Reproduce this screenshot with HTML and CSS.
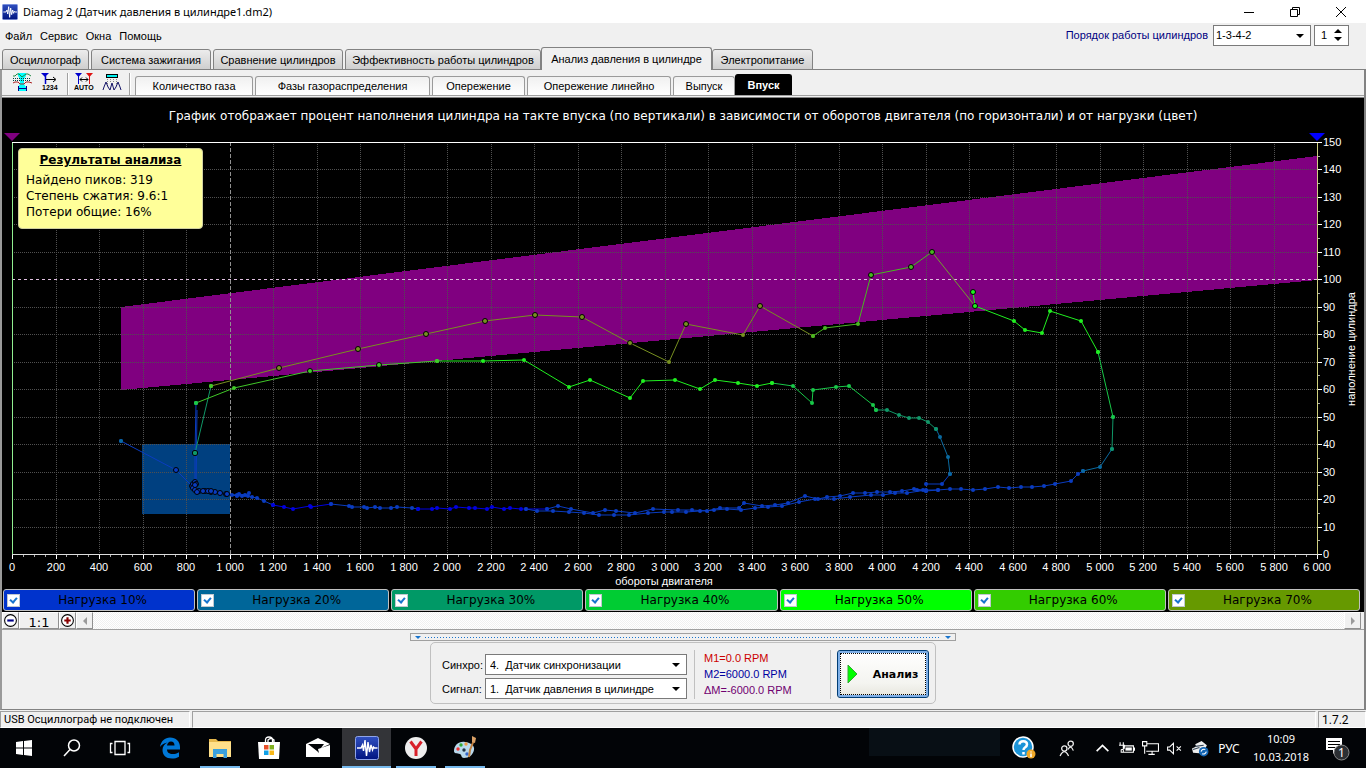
FILE: index.html
```html
<!DOCTYPE html>
<html lang="ru">
<head>
<meta charset="utf-8">
<title>Diamag 2</title>
<link rel="stylesheet" href="styles.css">
</head>
<body>
<svg class="defs" aria-hidden="true">
  <defs>
    <linearGradient id="appFill" x1="0" y1="0" x2="0" y2="1"><stop offset="0" stop-color="#3050c0"/><stop offset="1" stop-color="#001480"/></linearGradient>
    <symbol id="app-icon" viewBox="0 0 24 24">
      <rect x="0.5" y="0.5" width="23" height="23" rx="2" fill="url(#appFill)" stroke="#8fa4e8"/>
      <path d="M2 12h4l1.5-3 1 6 1.500-11 1.500 16 1.500-14 1.500 10 1.500-7 1.500 5 1-3 1 1h3" fill="none" stroke="#fff" stroke-width="1.400"/>
    </symbol>
  </defs>
</svg>

<header class="titlebar">
  <svg class="titlebar-icon"><use href="#app-icon"/></svg>
  <span class="titlebar-text">Diamag 2 (Датчик давления в цилиндре1.dm2)</span>
  <button class="win-btn" aria-label="Свернуть"><svg viewBox="0 0 12 12"><path d="M1 6.500h10"/></svg></button>
  <button class="win-btn" aria-label="Восстановить"><svg viewBox="0 0 12 12"><path d="M1.500 3.500h7v7h-7zM3.500 3v-1.500h7v7H9"/></svg></button>
  <button class="win-btn" aria-label="Закрыть"><svg viewBox="0 0 12 12"><path d="M1 1l10 10M11 1L1 11"/></svg></button>
</header>

<div class="menubar">
  <nav class="menu">
    <button>Файл</button><button>Сервис</button><button>Окна</button><button>Помощь</button>
  </nav>
  <label class="order-label" for="order">Порядок работы цилиндров</label>
  <span class="combo combo-order"><select id="order"><option>1-3-4-2</option></select></span>
  <span class="spinner">
    <input type="text" value="1" aria-label="Номер цилиндра">
    <span class="spinner-buttons">
      <button class="spin-up" aria-label="Больше"></button>
      <button class="spin-down" aria-label="Меньше"></button>
    </span>
  </span>
</div>

<div class="tabs">
  <button class="tab w-osc">Осциллограф</button>
  <button class="tab w-ign">Система зажигания</button>
  <button class="tab w-cmp">Сравнение цилиндров</button>
  <button class="tab w-eff">Эффективность работы цилиндров</button>
  <button class="tab w-prs tab-active">Анализ давления в цилиндре</button>
  <button class="tab w-pow">Электропитание</button>
</div>

<main class="workspace">
  <div class="toolbar">
    <button class="tool" aria-label="Фазы"><svg viewBox="0 0 20 20"><path fill="#0ff" d="M6 1h8v3l-2 3v5l2 3v4H6v-4l2-3V7L6 4z"/><path d="M1 4h2l2-2h2l3 3 4-3h2l3 2" fill="none" stroke="#284" /><path d="M1 6.500h18M1 8.500h18" stroke="#044" stroke-dasharray="1 1"/><path d="M1 11l2-1h3l2 2h4l2-2h3l3 1" fill="none" stroke="#a22"/><path d="M6.500 14v5M14.500 14v5M7 16.500h7" stroke="#008"/></svg></button>
    <button class="tool" aria-label="Номера"><svg viewBox="0 0 20 20"><path fill="#00c" d="M1 1h8L5 5z"/><path d="M5.500 4v8" stroke="#00c" stroke-width="1.500"/><path d="M6 7.500h9M13 5l3 2.500-3 2.500" fill="none" stroke="#000"/><text x="2" y="18" class="tool-text">1234</text></svg></button>
    <span class="tool-sep"></span>
    <button class="tool" aria-label="Авто"><svg viewBox="0 0 20 20"><path fill="#00c" d="M1 1h7L4.500 5z"/><path fill="#d11" d="M12 1h7l-3.500 4z"/><path d="M4.500 4v8" stroke="#00c"/><path d="M15.500 4v8" stroke="#d11"/><path d="M6 7.500h8M8 5.500l-2 2 2 2M12 5.500l2 2-2 2" fill="none" stroke="#000"/><text x="0" y="18" class="tool-text">AUTO</text></svg></button>
    <button class="tool" aria-label="Пики"><svg viewBox="0 0 20 20"><rect x="4.500" y="2.500" width="11" height="3" fill="#0ee" stroke="#000"/><path d="M5.500 7v7M8.500 7v3M11.500 7v3M14.500 7v7" stroke="#888" stroke-dasharray="1 1"/><path d="M1 18l1-3 2-5 2 5 2 3 2-7 2 7 2-3 2-5 2 5 1 3" fill="none" stroke="#116"/></svg></button>
    <span class="tool-sep"></span>
    <button class="subtab s-gas">Количество газа</button>
    <button class="subtab s-phase">Фазы газораспределения</button>
    <button class="subtab s-adv">Опережение</button>
    <button class="subtab s-lin">Опережение линейно</button>
    <button class="subtab s-out">Выпуск</button>
    <button class="subtab s-in subtab-active">Впуск</button>
  </div>

  <section class="chart">
    <h1 class="chart-title">График отображает процент наполнения цилиндра на такте впуска (по вертикали) в зависимости от оборотов двигателя (по горизонтали) и от нагрузки (цвет)</h1>
    <svg id="plot" class="plot" viewBox="2 132 1362 456" role="img" aria-label="Наполнение цилиндра от оборотов двигателя"></svg>
    <aside class="results">
      <h2>Результаты анализа</h2>
      <p>Найдено пиков: 319</p>
      <p>Степень сжатия: 9.6:1</p>
      <p>Потери общие: 16%</p>
    </aside>
    <div class="loads">
      <label class="load load-10"><input type="checkbox" checked><span>Нагрузка 10%</span></label>
      <label class="load load-20"><input type="checkbox" checked><span>Нагрузка 20%</span></label>
      <label class="load load-30"><input type="checkbox" checked><span>Нагрузка 30%</span></label>
      <label class="load load-40"><input type="checkbox" checked><span>Нагрузка 40%</span></label>
      <label class="load load-50"><input type="checkbox" checked><span>Нагрузка 50%</span></label>
      <label class="load load-60"><input type="checkbox" checked><span>Нагрузка 60%</span></label>
      <label class="load load-70"><input type="checkbox" checked><span>Нагрузка 70%</span></label>
    </div>
  </section>

  <div class="scrollrow">
    <button class="zoom-btn" aria-label="Уменьшить"><svg viewBox="0 0 14 14"><circle cx="7" cy="7" r="5.500"/><path stroke="#008" d="M4 7h6"/></svg></button>
    <button class="zoom-btn zoom-reset">1:1</button>
    <button class="zoom-btn" aria-label="Увеличить"><svg viewBox="0 0 14 14"><circle cx="7" cy="7" r="5.500"/><path stroke="#800" d="M4 7h6M7 4v6"/></svg></button>
    <button class="scroll-btn" aria-label="Влево"><svg viewBox="0 0 8 8"><path d="M6 0v8L2 4z"/></svg></button>
    <span class="scroll-track"></span>
    <button class="scroll-btn" aria-label="Вправо"><svg viewBox="0 0 8 8"><path d="M2 0v8l4-4z"/></svg></button>
  </div>

  <div class="controls">
    <div class="splitter"><i></i><span></span><i></i></div>
    <div class="group">
      <div class="sources">
        <label for="sync">Синхро:</label>
        <span class="combo"><select id="sync"><option>4.&nbsp; Датчик синхронизации</option></select></span>
        <label for="signal">Сигнал:</label>
        <span class="combo"><select id="signal"><option>1.&nbsp; Датчик давления в цилиндре</option></select></span>
      </div>
      <div class="markers">
        <span class="m1">M1=0.0 RPM</span>
        <span class="m2">M2=6000.0 RPM</span>
        <span class="dm">ΔM=-6000.0 RPM</span>
      </div>
      <button class="analyze"><svg viewBox="0 0 12 20"><path d="M1 1v18l9-9z"/></svg><span>Анализ</span></button>
    </div>
  </div>
</main>

<div class="statusbar">
  <span class="status-usb">USB Осциллограф не подключен</span>
  <span class="status-main"></span>
  <span class="status-version">1.7.2</span>
</div>

<footer class="taskbar">
  <button class="task task-sys" aria-label="Пуск"><svg viewBox="0 0 24 24"><path fill="#fff" d="M4 6l7-1v6.500H4zM12 5l8-1v7.500h-8zM4 12.500h7V19l-7-1zM12 12.500h8V20l-8-1z"/></svg></button>
  <button class="task task-sys" aria-label="Поиск"><svg viewBox="0 0 24 24"><g fill="none" stroke="#fff" stroke-width="1.500"><circle cx="14" cy="9.500" r="5.500"/><path d="M10 13.500L4 20"/></g></svg></button>
  <button class="task task-sys" aria-label="Представление задач"><svg viewBox="0 0 24 24"><g fill="none" stroke="#fff" stroke-width="1.300"><path d="M7 5.500h10v13H7zM4.500 7.500h-2v9h2M19.500 7.500h2v9h-2"/></g></svg></button>
  <button class="task task-edge" aria-label="Edge"><svg viewBox="0 0 24 24"><path fill="#0078d7" d="M2 11C3 5 7 1.500 12 1.500c6 0 10 4 10 9.500v2.500H9c0 3 2.500 4.500 5.500 4.500 2.500 0 4.500-.5 6.500-1.800v4.500C19 22 16.500 22.500 14 22.500c-6 0-9.500-3.500-9.500-8.500 0-3.500 2-6 5-7.500C5.500 7 3.500 9 2 11zm7-1.500h7.500c0-2.500-1.300-4-3.500-4-2.300 0-3.700 1.700-4 4z"/></svg></button>
  <button class="task task-open" aria-label="Проводник"><svg viewBox="0 0 24 24"><path fill="#e6b84c" d="M1 3h7l2 2h13v5H1z"/><path fill="#ffe08a" d="M1 6h22v15H1z"/><path fill="#3aa0dc" d="M5 13h14v9h-3.500v-4h-7v4H5z"/></svg></button>
  <button class="task" aria-label="Магазин"><svg viewBox="0 0 24 24"><path fill="none" stroke="#fff" stroke-width="1.300" d="M8.500 7V4q0-3 3.500-3t3.500 3v3M11 6V4q3-3 6 0v2"/><path fill="#fff" d="M1 6h22l-1 17H2z"/><path fill="#e8502a" d="M7 9h4.500v4.500H7z"/><path fill="#80b020" d="M12.500 9H17v4.500h-4.500z"/><path fill="#10a0e8" d="M7 14.500h4.500V19H7z"/><path fill="#f8b818" d="M12.500 14.500H17V19h-4.500z"/></svg></button>
  <button class="task" aria-label="Почта"><svg viewBox="0 0 24 24"><path fill="#fff" d="M0 8l12-6 12 6-9 4 3-4H2l9 7 2 2-1-4 12-4v12H0z"/></svg></button>
  <button class="task task-open task-current" aria-label="Diamag 2"><svg><use href="#app-icon"/></svg></button>
  <button class="task task-open" aria-label="Яндекс"><svg viewBox="0 0 24 24"><circle cx="12" cy="12" r="11" fill="#eee"/><path d="M6.500 5.500L12 13l5.500-7.500M12 12.500V20" fill="none" stroke="#d8202a" stroke-width="3"/></svg></button>
  <button class="task task-open" aria-label="Paint"><svg viewBox="0 0 24 24"><path fill="#b8d8ec" d="M1 15c0-6 5-10 11-9 6 .5 10 4 9 8-1 5-5 8-10 8-3 0-2-3-4-4-3-1-6 0-6-3z"/><circle cx="5" cy="13" r="1.700" fill="#e33"/><circle cx="8" cy="9" r="1.700" fill="#3a3"/><circle cx="13" cy="8" r="1.700" fill="#e94"/><circle cx="11" cy="14" r="1.700" fill="#234"/><circle cx="14" cy="18" r="1.700" fill="#36c"/><path d="M21 4l-4 10-1 7" fill="none" stroke="#c08040" stroke-width="2"/><path fill="#d9a066" d="M19 0l4 2-1 5-3-1z"/></svg></button>
  <span class="task-ghost"></span>
  <button class="tray tray-help" aria-label="Справка"><svg viewBox="0 0 24 24"><circle cx="11" cy="11" r="10" fill="#1c94d8" stroke="#fff" stroke-width="1.500"/><path d="M7.500 8.500C7.500 4 15 4 15 8.500c0 3-3.500 2.500-3.500 5.500M11.500 16v2.500" fill="none" stroke="#fff" stroke-width="2.500"/><circle cx="19" cy="18" r="4.500" fill="#f0a828"/><path d="M19 15.500v1M19 17.500v3.500" stroke="#fff" stroke-width="1.500"/></svg></button>
  <button class="tray tray-people" aria-label="Люди"><svg viewBox="0 0 16 16"><g fill="none" stroke="#eee" stroke-width="1.200"><circle cx="11" cy="3.500" r="2.500"/><circle cx="5" cy="8" r="2.500"/><path d="M8.500 9q2.500-5 5 1M1 15q4-8 8 0"/></g></svg></button>
  <button class="tray" aria-label="Скрытые значки"><svg viewBox="0 0 16 16"><path d="M2.500 10.500L8 5l5.500 5.500" fill="none" stroke="#fff" stroke-width="1.500"/></svg></button>
  <button class="tray" aria-label="Питание"><svg viewBox="0 0 16 16"><path d="M5 5.500h9.500v6H5zM15.500 7v3M2 2v3M5 2v3M1 5h5v2q0 2-3 2M3 9v2.500h2" fill="none" stroke="#fff"/><path fill="#fff" d="M7 7h6v3H7z"/></svg></button>
  <button class="tray" aria-label="Сеть"><svg viewBox="0 0 16 16"><path d="M4 3.500h11.500v7H4M6 13.500h6M9.500 11v2M.5 1.500h4v4h-4zM2.500 6v7" fill="none" stroke="#fff"/></svg></button>
  <button class="tray" aria-label="Звук"><svg viewBox="0 0 16 16"><path d="M1.500 6.500h2L7 3v10L3.500 9.500h-2zM10 6l4 4M14 6l-4 4" fill="none" stroke="#fff"/></svg></button>
  <button class="tray tray-cloud" aria-label="Облако"><svg viewBox="0 0 16 16"><path fill="#eee" d="M1 12L0 8l4-2-1-2 6-3 5 4-1 2 2 3-2 3z"/><path d="M3 6l8-1M1 9l6-2" stroke="#345"/><circle cx="11" cy="11" r="4.500" fill="#1466b4"/><path d="M8.500 11q1-3 4-2M13.500 11q-1 3-4 2" fill="none" stroke="#fff"/></svg></button>
  <button class="lang">РУС</button>
  <div class="clock"><span>10:09</span><span>10.03.2018</span></div>
  <button class="notify" aria-label="Уведомления"><svg viewBox="0 0 26 26"><path fill="#fff" d="M2 3h16v12h-5l-4 4v-4H2z"/><path d="M4 6.500h12M4 9.500h12M4 12.500h7" stroke="#000"/><circle cx="17.500" cy="17.500" r="7.500" fill="#2c2f33" stroke="#888"/><text x="17.500" y="22">1</text></svg></button>
</footer>
<script src="chart.js"></script>
</body>
</html>
```

FILE: styles.css
```css
* { box-sizing: border-box; }

body {
  margin: 0;
  min-height: 100vh;
  display: flex;
  flex-direction: column;
  background: #f0f0f0;
  color: #000;
  font-family: "Liberation Sans", Arial, sans-serif;
  font-size: 11px;
}

button, input, select {
  margin: 0;
  padding: 0;
  border: 0;
  background: none;
  color: inherit;
  font: inherit;
}

h1, h2, p { margin: 0; }

.defs { position: absolute; width: 0; height: 0; }

/* Title bar */
.titlebar {
  display: flex;
  align-items: center;
  height: 23px;
  padding: 0 2px;
  background: #fff;
  font-family: "Noto Sans", sans-serif;
}
.titlebar-icon { width: 16px; height: 16px; }
.titlebar-text { flex: 1; padding-left: 5px; }
.win-btn { display: flex; justify-content: center; width: 46px; }
.win-btn svg { width: 12px; height: 12px; fill: none; stroke: #000; }

/* Menu row */
.menubar {
  display: flex;
  align-items: center;
  height: 24px;
  padding-right: 17px;
}
.menu {
  display: flex;
  flex: 1;
  gap: 8px;
  padding: 1px 0 0 5px;
}
.order-label { color: #000080; padding-right: 5px; }

.combo {
  position: relative;
  display: block;
  height: 21px;
  border: 1px solid #7a7a7a;
  background: #fff;
}
.combo::after {
  content: "";
  position: absolute;
  top: 8px;
  right: 6px;
  border: 4px solid transparent;
  border-top-color: #000;
  border-bottom: 0;
  pointer-events: none;
}
.combo select {
  width: 100%;
  height: 100%;
  padding-left: 4px;
  appearance: none;
}
.combo-order { width: 98px; }
.combo-order select { padding-left: 2px; }

.spinner {
  display: flex;
  width: 35px;
  height: 21px;
  margin-left: 3px;
  border: 1px solid #7a7a7a;
  background: #fff;
}
.spinner input { width: 19px; padding-left: 6px; }
.spinner-buttons { display: flex; flex-direction: column; justify-content: center; gap: 4px; }
.spin-up, .spin-down { border: 4px solid transparent; }
.spin-up { border-top: 0; border-bottom-color: #000; }
.spin-down { border-bottom: 0; border-top-color: #000; }

/* Main tabs */
.tabs {
  display: flex;
  align-items: flex-end;
  gap: 2px;
  height: 23px;
  padding-left: 2px;
  box-shadow: inset 0 -1px #828282;
}
.tab {
  height: 21px;
  border: 1px solid #828282;
  border-radius: 3px 3px 0 0;
  background: linear-gradient(#ececec, #cfcfcf);
  white-space: nowrap;
}
.tab-active {
  height: 23px;
  margin: 0 -2px;
  padding-bottom: 1px;
  border-bottom: 0;
  background: #f0f0f0;
}
.w-osc { width: 87px; }
.w-ign { width: 120px; }
.w-cmp { width: 130px; }
.w-eff { width: 196px; }
.w-prs { width: 171px; }
.w-pow { width: 101px; }

/* Workspace frame */
.workspace {
  display: flex;
  flex-direction: column;
  flex: 1;
  border: solid #828282;
  border-width: 0 2px 1px;
  border-left-color: #9a9a9a;
}

.toolbar {
  display: flex;
  align-items: flex-end;
  height: 26px;
  padding-left: 9px;
  border-bottom: 1px solid #a0a0a0;
}
.tool { width: 20px; height: 20px; margin: 0 7px 3px 1px; }
.tool svg { display: block; width: 20px; height: 20px; }
.tool-text { font: bold 7px "Liberation Sans", Arial, sans-serif; }
.tool-sep { width: 2px; height: 22px; margin-right: 4px; border-left: 1px solid #a0a0a0; background: #fff; }

.subtab {
  height: 19px;
  margin-right: 2px;
  border: 1px solid #9a9a9a;
  border-bottom: 0;
  border-radius: 3px 3px 0 0;
  background: linear-gradient(#f0f0f0, #fff);
  white-space: nowrap;
}
.subtab-active {
  height: 21px;
  border-color: #000;
  background: #000;
  color: #fff;
  font-weight: bold;
}
.s-gas { width: 118px; }
.s-phase { width: 175px; }
.s-adv { width: 93px; }
.s-lin { width: 144px; }
.s-out { width: 62px; margin-right: 0; }
.s-in { width: 57px; }

/* Chart */
.chart {
  position: relative;
  margin-top: 1px;
  border-top: 1px solid #828282;
  background: #000;
}
.chart-title {
  height: 34px;
  color: #fff;
  font: 12px/36px "DejaVu Sans", Verdana, sans-serif;
  text-align: center;
  white-space: nowrap;
}
.plot { display: block; width: 100%; height: auto; }
.plot text { fill: #fff; font: 11px "Liberation Sans", Arial, sans-serif; }
.plot .middle { text-anchor: middle; }

.results {
  position: absolute;
  top: 50px;
  left: 16px;
  width: 185px;
  height: 81px;
  padding: 3px 7px;
  border: 1px solid #d0d0a0;
  border-radius: 4px;
  background: #ffff99;
  font: 12px/16px "DejaVu Sans", Verdana, sans-serif;
}
.results h2 {
  margin-bottom: 4px;
  font-size: 12px;
  text-align: center;
  text-decoration: underline;
}

.loads { display: flex; gap: 2px; height: 24px; padding: 1px 4px 1px 1px; }
.load {
  display: flex;
  flex: 1;
  align-items: center;
  padding-left: 3px;
  border: 1px solid #c0c0c0;
  border-radius: 3px;
  font: 12px "DejaVu Sans", Verdana, sans-serif;
}
.load span { flex: 1; padding-right: 9px; text-align: center; }
.load input {
  position: relative;
  width: 13px;
  height: 13px;
  border: 1px solid #c0c8d0;
  background: #fff;
  appearance: none;
}
.load input:checked::after {
  content: "";
  position: absolute;
  top: 1px;
  left: 3px;
  width: 5px;
  height: 7px;
  box-sizing: border-box;
  border: solid #1874cd;
  border-width: 0 2px 2px 0;
  transform: rotate(40deg);
}
.load-10 { background: #0033cc; }
.load-20 { background: #006699; }
.load-30 { background: #009966; }
.load-40 { background: #00cc33; }
.load-50 { background: #00ff00; }
.load-60 { background: #33cc00; }
.load-70 { background: #669900; }

/* Zoom and scroll row */
.scrollrow {
  display: flex;
  height: 18px;
  padding-right: 3px;
  border-bottom: 1px solid #a0a0a0;
}
.zoom-btn, .scroll-btn {
  display: flex;
  align-items: center;
  justify-content: center;
  width: 17px;
  border: 1px solid #909090;
  border-top-color: #fff;
  border-left-color: #fff;
  background: #f0f0f0;
}
.zoom-btn svg { flex: none; width: 15px; height: 15px; fill: #fff; stroke: #000; }
.zoom-btn path { stroke-width: 2px; }
.zoom-reset { width: 40px; padding-top: 3px; font: 13px "DejaVu Sans", Verdana, sans-serif; }
.scroll-btn svg { width: 8px; height: 8px; fill: #9a9a9a; }
.scroll-track { flex: 1; background: repeating-conic-gradient(#f0f0f0 0 25%, #fff 0 50%) 0 0 / 2px 2px; }

/* Lower controls */
.controls {
  display: flex;
  flex: 1;
  flex-direction: column;
  align-items: center;
  padding-top: 3px;
}
.splitter {
  display: flex;
  align-items: center;
  gap: 4px;
  width: 546px;
  height: 8px;
  padding: 0 4px;
  border: 1px solid #a0a0a0;
}
.splitter i { border: 3px solid transparent; border-top-color: #1874cd; border-bottom: 0; }
.splitter span { flex: 1; height: 1px; background: repeating-linear-gradient(90deg, #1874cd 0 1px, transparent 1px 3px); }
.group {
  display: flex;
  width: 506px;
  height: 62px;
  margin-top: 1px;
  padding: 7px 6px 4px 11px;
  border: 1px solid #c0c0c0;
  border-radius: 5px;
}
.sources {
  display: grid;
  grid-template-columns: 43px 202px;
  gap: 3px 0;
  align-content: end;
  align-items: center;
  padding-right: 7px;
}
.markers {
  display: flex;
  flex: 1;
  flex-direction: column;
  padding-left: 9px;
  border: solid #c0c0c0;
  border-width: 0 1px;
  line-height: 16px;
}
.m1 { color: #cc0000; }
.m2 { color: #0000a0; }
.dm { color: #700070; }
.analyze {
  display: flex;
  align-items: center;
  width: 92px;
  height: 48px;
  margin-left: 6px;
  padding-left: 9px;
  border: 1px solid #003c74;
  border-radius: 3px;
  outline: 1px dotted #000;
  outline-offset: -4px;
  background: linear-gradient(#fff, #f4f4f0 70%, #e6e5dc);
  box-shadow: inset 0 0 0 2px #7fb0e8;
  font: bold 11px "DejaVu Sans", Verdana, sans-serif;
}
.analyze svg { width: 12px; height: 20px; fill: #0f0; stroke: #3a3; }
.analyze span { flex: 1; padding-left: 4px; text-align: center; }

/* Status bar */
.statusbar {
  display: flex;
  gap: 2px;
  height: 18px;
  padding-top: 1px;
  font: 11px/16px Roboto, sans-serif;
  background: #f0f0f0;
}
.statusbar span { padding-left: 3px; border: 1px solid #a0a0a0; border-right-color: #fff; border-bottom-color: #fff; }
.statusbar .status-usb { width: 190px; }
.statusbar .status-main { flex: 1; }
.statusbar .status-version { width: 48px; font-size: 12px; }

/* Taskbar */
.taskbar {
  display: flex;
  align-items: center;
  height: 40px;
  padding-right: 16px;
  background: #020407;
  color: #fff;
  font-family: "Noto Sans", sans-serif;
  font-size: 12px;
}
.task {
  display: flex;
  align-items: center;
  justify-content: center;
  width: 49px;
  height: 40px;
}
.task svg { width: 24px; height: 24px; }
.task-sys { width: 48px; }
.task-edge { width: 51px; }
.task-open { background: linear-gradient(#76b9ed, #76b9ed) center bottom / 40px 2px no-repeat; }
.task-current { background: linear-gradient(#76b9ed, #76b9ed) center bottom / 100% 2px no-repeat, #333438; }
.task-ghost { width: 131px; height: 28px; margin: 0 4px 12px auto; background: #080f15; }
.tray { display: flex; justify-content: center; width: 24px; }
.tray svg { width: 17px; height: 17px; }
.tray-help { width: 40px; }
.tray-help svg { width: 24px; height: 24px; }
.tray-people { width: 46px; }
.tray-cloud { width: 28px; }
.lang { width: 30px; }
.clock {
  display: flex;
  flex-direction: column;
  align-items: center;
  width: 74px;
  font-size: 11px;
  line-height: 18px;
}
.notify { width: 32px; padding-left: 6px; }
.notify svg { display: block; width: 26px; height: 26px; }
.notify text { fill: #fff; font: 12px "Noto Sans", sans-serif; text-anchor: middle; }
```

FILE: chart.js
```js
(function () {
  var NS = "http://www.w3.org/2000/svg";
  var plot = document.getElementById("plot");
  var LEFT = 12, RIGHT = 1317, TOP = 142, BOTTOM = 554;

  function px(rpm) { return Math.round(LEFT + rpm * (RIGHT - LEFT) / 6000); }
  function py(fill) { return Math.round(BOTTOM - fill * (BOTTOM - TOP) / 150); }

  function add(name, attrs, text) {
    var el = document.createElementNS(NS, name);
    for (var key in attrs) el.setAttribute(key, attrs[key]);
    if (text) el.textContent = text;
    plot.appendChild(el);
    return el;
  }
  function line(x1, y1, x2, y2, color, dash) {
    var attrs = { x1: x1, y1: y1, x2: x2, y2: y2, stroke: color };
    if (dash) attrs["stroke-dasharray"] = dash;
    add("line", attrs);
  }

  // Tolerance band and idle zone
  add("polygon", { points: "121,307 1317,156 1317,280 121,390", fill: "#800080", "shape-rendering": "crispEdges" });
  add("rect", { x: 142, y: 444, width: 88, height: 70, fill: "#004080" });

  // Grid, ticks and tick labels
  for (var rpm = 0; rpm <= 6000; rpm += 50) {
    var x = px(rpm) + 0.5;
    if (rpm % 200 === 0) {
      if (rpm > 0 && rpm < 6000 && rpm !== 1000) line(x, TOP, x, BOTTOM, "#505050", "1 1");
      line(x, BOTTOM, x, BOTTOM + 5, "#fff");
      var label = rpm < 1000 ? String(rpm) : Math.floor(rpm / 1000) + " " + String(rpm % 1000).padStart(3, "0");
      add("text", { x: px(rpm), y: 571, "class": "middle" }, label);
    } else {
      line(x, BOTTOM, x, BOTTOM + 3, "#aaa");
    }
  }
  for (var fill = 0; fill <= 150; fill += 5) {
    var y = py(fill) + 0.5;
    if (fill % 10 === 0) {
      if (fill > 0 && fill < 150 && fill !== 100) line(LEFT, y, RIGHT, y, "#505050", "1 1");
      line(RIGHT, y, RIGHT + 5, y, "#fff");
      add("text", { x: 1323, y: py(fill) + 4 }, String(fill));
    } else {
      line(RIGHT, y, RIGHT + 3, y, "#aaa");
    }
  }
  line(px(1000) + 0.5, TOP, px(1000) + 0.5, BOTTOM, "#909090", "4 2");
  line(LEFT, 279.5, RIGHT, 279.5, "#e0c0e0", "3 3");
  line(LEFT, 142.5, RIGHT + 1, 142.5, "#fff");
  line(LEFT, 554.5, RIGHT + 1, 554.5, "#ddd");
  line(12.5, 143, 12.5, BOTTOM, "#90ee90");
  line(1317.5, 143, 1317.5, BOTTOM, "#d0d080");

  var tail = [[917,490],[926,491],[938,490],[950,489],[961,489],[973,490],[985,489],[998,487],[1009,488],[1021,487],[1032,487],[1044,486],[1055,484],[1071,481],[1078,474],[1083,471]];
  var series = [
    { color: "#0a3cc0", points: [[121,441],[176,470],[192,486],[193,484],[195,482],[193,488],[195,490],[199,491],[205,491],[211,492],[215,492],[220,493],[226,494],[232,495],[237,496],[242,496],[248,496],[252,497],[257,498],[264,501],[273,505]] },
    { color: "#0a3cc0", points: [[196,484],[197,492],[203,491],[208,491],[211,491],[227,494],[237,495],[239,494],[245,495],[249,493]] },
    { color: "#0a3cc0", points: [[196,403],[195,453],[195,485]] },
    { color: "#0a3cc0", points: [[197,410],[196,487]], bare: true },
    { color: "#0000e0", points: [[273,505],[284,507],[293,509],[310,506],[311,507],[331,504]] },
    { color: "#0a3cc0", points: [[331,504],[349,506],[352,507],[364,507],[367,508],[375,507],[380,508],[391,508],[397,507],[412,508],[418,509]] },
    { color: "#0000e0", points: [[418,509],[432,509],[437,508],[450,509],[456,507],[469,508],[475,508],[487,509],[492,507],[504,509],[510,508],[521,509],[526,509],[547,509]] },
    { color: "#0a3cc0", points: [[526,509],[537,511],[553,511],[569,512],[584,513],[599,515],[614,515],[629,515],[648,513],[664,512],[672,512],[686,512],[700,511],[714,510],[727,509],[741,510],[755,508],[768,507],[782,506],[799,502],[815,499],[834,499],[850,497],[871,495],[883,495],[895,493],[907,493],[926,490],[938,490]] },
    { color: "#0a3cc0", points: [[547,509],[558,506],[571,509],[593,513],[605,510],[616,511],[635,513],[653,509],[678,510],[692,510],[707,511],[720,508],[739,508],[744,503],[762,506],[775,505],[788,503],[805,496],[818,499],[827,497],[840,496],[853,493],[865,493],[877,492],[890,492],[902,491],[914,489],[923,490],[926,491]] },
    { color: "#0a3cc0", points: tail },
    { color: "#0a3cc0", points: [[926,484],[942,484],[950,474]] },
    { color: "#0a6aa0", points: [[950,474],[948,457],[940,437],[936,429]] },
    { color: "#0a6aa0", points: [[1083,471],[1100,467],[1112,449]] },
    { color: "#109868", points: [[1112,449],[1113,417]] },
    { color: "#109868", points: [[195,453],[211,386]] },
    { color: "#109868", points: [[936,429],[928,422],[919,418],[909,418],[899,415],[887,410],[876,410]] },
    { color: "#18c848", points: [[1113,417],[1098,352]] },
    { color: "#18c848", points: [[876,410],[873,405],[849,386],[836,387],[813,390],[812,403],[793,386],[772,383]] },
    { color: "#20f020", points: [[772,383],[757,386],[738,383],[715,380],[700,389],[675,380],[643,381],[630,398],[590,380],[569,387],[524,360],[483,361],[437,361]] },
    { color: "#20f020", points: [[1098,352],[1081,321],[1050,311],[1042,333],[1025,330],[1014,321],[975,306],[973,292]] },
    { color: "#40c828", points: [[437,361],[379,365],[310,371],[234,388],[196,403]] },
    { color: "#789020", points: [[211,386],[279,368],[358,349],[426,334],[485,321],[535,315],[582,317],[630,343],[669,362],[686,324],[743,335],[760,306],[813,336]] },
    { color: "#48b820", points: [[813,336],[825,328],[858,324],[871,275],[911,267],[932,252]] },
    { color: "#70a030", points: [[932,252],[975,306]], bare: true }
  ];

  function outlined(p) {
    var inBand = p[0] > 121 && p[1] < 390 - (p[0] - 121) * 110 / 1196;
    var inIdle = p[0] > 142 && p[0] < 230 && p[1] > 444;
    return inBand || inIdle;
  }
  series.forEach(function (s) {
    add("polyline", { points: s.points.join(" "), fill: "none", stroke: s.color, "stroke-width": 1 });
  });
  series.forEach(function (s) {
    if (s.bare) return;
    s.points.forEach(function (p) {
      var ring = outlined(p);
      add("circle", { cx: p[0], cy: p[1], r: ring ? 2.5 : 2, fill: s.color, stroke: ring ? "#000" : "none" });
    });
  });
  add("circle", { cx: 121, cy: 441, r: 2, fill: "#0a6aa0" });
  add("circle", { cx: 211, cy: 386, r: 2, fill: "#40c828" });
  add("circle", { cx: 195, cy: 453, r: 2, fill: "#109868" });
  add("circle", { cx: 196, cy: 403, r: 2, fill: "#18c848" });

  // Range markers and axis names
  add("polygon", { points: "4,133 20,133 12,141", fill: "#800080" });
  add("polygon", { points: "1309,133 1325,133 1317,141", fill: "#0000ff" });
  add("text", { x: 664, y: 585, "class": "middle" }, "обороты двигателя");
  add("text", { x: 0, y: 0, "class": "middle", transform: "translate(1355 349) rotate(-90)" }, "наполнение цилиндра");
})();
```
